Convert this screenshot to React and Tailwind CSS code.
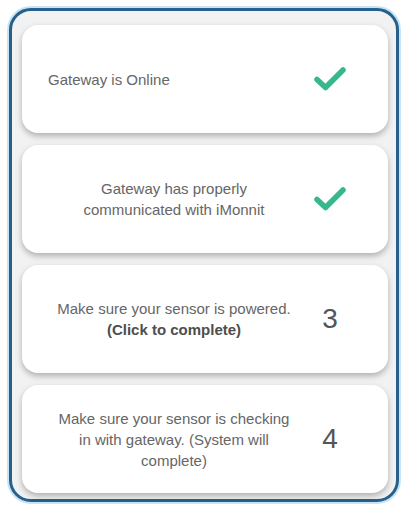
import { Fragment } from 'react';

// Setup checklist steps for a new gateway/sensor pairing
const STEPS = [
  { lines: ['Gateway is Online'], align: 'left', done: true },
  { lines: ['Gateway has properly', 'communicated with iMonnit'], align: 'center', done: true },
  {
    lines: ['Make sure your sensor is powered.'],
    strong: '(Click to complete)',
    align: 'center',
    num: 3,
  },
  {
    lines: ['Make sure your sensor is checking', 'in with gateway. (System will', 'complete)'],
    align: 'center',
    num: 4,
  },
];

function Check() {
  return (
    <svg width="34" height="26" viewBox="0 0 34 26" fill="none">
      <polyline
        points="4,13.5 12.5,21.5 30,4"
        stroke="#35b98c"
        strokeWidth="5.5"
        strokeLinecap="round"
        strokeLinejoin="round"
      />
    </svg>
  );
}

function StepCard({ step }) {
  return (
    <div className="flex h-[108px] items-center rounded-[16px] bg-white pl-[26px] pr-[28px] shadow-[0_3px_6px_rgba(0,0,0,0.28)]">
      <div
        className={`w-[252px] text-[15px] leading-[21px] text-[#666] ${
          step.align === 'left' ? 'text-left' : 'text-center'
        }`}
      >
        {step.lines.map((l, i) => (
          <Fragment key={i}>
            {i > 0 && <br />}
            {l}
          </Fragment>
        ))}
        {step.strong && (
          <>
            <br />
            <span className="font-bold text-[#4e4e4e]">{step.strong}</span>
          </>
        )}
      </div>
      <div className="flex flex-1 items-center justify-center">
        {step.done ? (
          <Check />
        ) : (
          <span className="text-[28px] leading-none text-[#555]">{step.num}</span>
        )}
      </div>
    </div>
  );
}

export default function App() {
  return (
    <div
      className="min-h-[509px] bg-white pl-[9px] pr-[5px] pt-[8px]"
      style={{ fontFamily: '"Liberation Sans", Arial, sans-serif' }}
    >
      <div className="flex w-[390px] flex-col gap-[12px] rounded-[22px] border-[3px] border-[#27608a] bg-[#f2f2f2] pb-[6px] pl-[10px] pr-[8px] pt-[14px] shadow-[0_0_0_2px_#c6e4f6]">
        {STEPS.map((s, i) => (
          <StepCard key={i} step={s} />
        ))}
      </div>
    </div>
  );
}
